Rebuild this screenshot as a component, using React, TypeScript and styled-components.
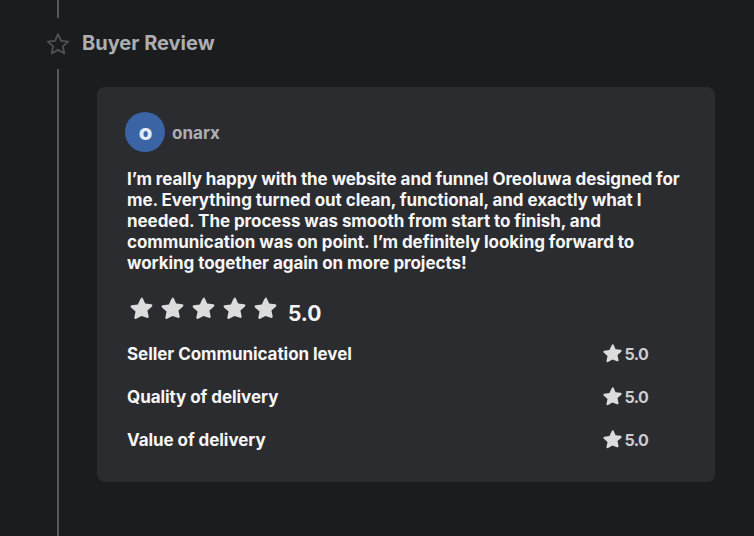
import React from 'react';
import styled, {createGlobalStyle} from "styled-components";

const GlobalStyle = createGlobalStyle`
  html, body {
    margin: 0;
    padding: 0;
    height: 536px;
    overflow: hidden;
    background: #1b1c1e;
    font-family: Inter, "Liberation Sans", sans-serif;
  }
`

const STAR = "M12 2.2c.5 0 .9.3 1.1.7l2.4 5.3 5.9.7c1 .1 1.4 1.4.7 2.1l-4.4 3.9 1.2 5.7c.2 1-.9 1.8-1.8 1.3L12 20.1l-5.1 2.8c-.9.5-2-.3-1.8-1.3l1.2-5.7-4.4-3.9c-.7-.7-.3-2 .7-2.1l5.9-.7 2.4-5.3c.2-.4.6-.7 1.1-.7z"

const Star = ({size}: {size: number}) => (
    <svg width={size} height={size} viewBox="0 0 24 24" fill="#dcdcdc">
        <path d={STAR}/>
    </svg>
)

const criteria = ["Seller Communication level", "Quality of delivery", "Value of delivery"]

function App() {
    return (
        <>
            <GlobalStyle/>
            <Page>
                <TopLine/>
                <Header>
                    <svg width="24" height="24" viewBox="0 0 24 24" fill="none" stroke="#505153" strokeWidth="1.8" strokeLinejoin="round">
                        <path d="M12 2.2l3 6.6 7.2.8-5.4 4.8 1.5 7.1-6.3-3.6-6.3 3.6 1.5-7.1-5.4-4.8 7.2-.8z"/>
                    </svg>
                    <Title>Buyer Review</Title>
                </Header>
                <Body>
                    <Card>
                        <User>
                            <Avatar>o</Avatar>
                            <UserName>onarx</UserName>
                        </User>
                        <Comment>
                            I’m really happy with the website and funnel Oreoluwa designed for<br/>
                            me. Everything turned out clean, functional, and exactly what I<br/>
                            needed. The process was smooth from start to finish, and<br/>
                            communication was on point. I’m definitely looking forward to<br/>
                            working together again on more projects!
                        </Comment>
                        <Overall>
                            <Stars>
                                {[0, 1, 2, 3, 4].map(i => <Star key={i} size={25}/>)}
                            </Stars>
                            <OverallScore>5.0</OverallScore>
                        </Overall>
                        <Criteria>
                            {criteria.map(name => (
                                <Row key={name}>
                                    <RowLabel>{name}</RowLabel>
                                    <RowScore>
                                        <Star size={21}/>
                                        <ScoreText>5.0</ScoreText>
                                    </RowScore>
                                </Row>
                            ))}
                        </Criteria>
                    </Card>
                </Body>
            </Page>
        </>
    );
}

const Page = styled.div`
  width: 754px;
  height: 536px;
  display: flex;
  flex-direction: column;
  overflow: hidden;
`

const TopLine = styled.div`
  width: 2px;
  height: 18px;
  margin-left: 57px;
  background: #57585a;
`

const Header = styled.div`
  height: 51px;
  display: flex;
  align-items: center;
  gap: 12px;
  padding-left: 46px;
`

const Title = styled.h2`
  margin: -2px 0 0;
  color: #adaeb1;
  font-size: 20px;
  font-weight: 700;
  line-height: 24px;
`

const Body = styled.div`
  flex: 1;
  margin-left: 57px;
  padding: 18px 0 0 38px;
  border-left: 2px solid #57585a;
`

const Card = styled.div`
  width: 618px;
  height: 395px;
  box-sizing: border-box;
  padding: 25px 30px 0 30px;
  border-radius: 8px;
  background: #2b2c30;
`

const User = styled.div`
  display: flex;
  align-items: center;
  gap: 7px;
  margin-left: -2px;
`

const Avatar = styled.div`
  width: 40px;
  height: 40px;
  display: flex;
  align-items: center;
  justify-content: center;
  box-sizing: border-box;
  padding-left: 1px;
  border-radius: 50%;
  background: #3b64a5;
  color: #e3ebf6;
  font-size: 22px;
  font-weight: 800;
`

const UserName = styled.span`
  margin-top: 1px;
  color: #adaeb1;
  font-size: 17px;
  font-weight: 700;
`

const Comment = styled.p`
  margin: 17px 0 0;
  color: #f6f6f7;
  font-size: 17px;
  font-weight: 700;
  letter-spacing: -0.06px;
  line-height: 21px;
  white-space: nowrap;
`

const Overall = styled.div`
  display: flex;
  align-items: flex-start;
  gap: 11px;
  margin: 22px 0 0 2px;
`

const Stars = styled.div`
  display: flex;
  gap: 6px;
  margin-top: -1px;
`

const OverallScore = styled.span`
  margin-top: 5px;
  margin-left: -1px;
  color: #f6f6f7;
  font-size: 21px;
  font-weight: 700;
  letter-spacing: -0.1px;
  line-height: 26px;
`

const Criteria = styled.div`
  display: flex;
  flex-direction: column;
  gap: 22px;
  margin-top: 16px;
`

const Row = styled.div`
  height: 21px;
  display: flex;
  align-items: center;
  justify-content: space-between;
  padding-right: 37px;
`

const RowLabel = styled.span`
  color: #f6f6f7;
  font-size: 17px;
  font-weight: 700;
  letter-spacing: -0.06px;
`

const RowScore = styled.div`
  display: flex;
  align-items: center;
  gap: 2px;
  margin-left: -1px;

  svg {
    margin-top: -2px;
  }
`

const ScoreText = styled.span`
  color: #cdcdcf;
  font-size: 16px;
  font-weight: 700;
  letter-spacing: -0.7px;
`

export default App;
